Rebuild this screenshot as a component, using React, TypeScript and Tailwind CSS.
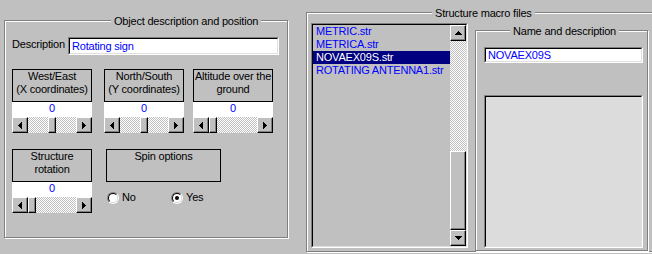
import type { ReactNode } from "react";

const raised =
  "border border-t-white border-l-white border-r-black border-b-black shadow-[inset_-1px_-1px_0_#808080] bg-[#c0c0c0]";
const dither =
  "bg-[image:repeating-conic-gradient(#c0c0c0_0_25%,#ffffff_0_50%)] bg-[length:2px_2px]";
const sunkenOuter = "border border-t-[#808080] border-l-[#808080] border-r-white border-b-white";
const sunkenInner = "border border-t-black border-l-black border-r-[#dfdfdf] border-b-[#dfdfdf]";

function GroupBox({
  title,
  titleClass,
  className,
  children,
}: {
  title: string;
  titleClass: string;
  className: string;
  children: ReactNode;
}) {
  return (
    <div
      className={`relative shrink-0 border border-[#808080] shadow-[inset_1px_1px_0_#fff,1px_1px_0_#fff] ${className}`}
    >
      <span className={`absolute whitespace-nowrap bg-[#c0c0c0] px-[3px] ${titleClass}`}>{title}</span>
      {children}
    </div>
  );
}

function TextBox({ text, className }: { text: string; className: string }) {
  return (
    <div className={`${sunkenOuter} ${className}`}>
      <div className={`${sunkenInner} h-full bg-white pl-[2px] text-[#0000ff]`}>{text}</div>
    </div>
  );
}

function Arrow({ dir }: { dir: "left" | "right" | "up" | "down" }) {
  const horiz = dir === "left" || dir === "right";
  const steps = [0, 1, 2, 3];
  return (
    <svg width={horiz ? 4 : 7} height={horiz ? 7 : 4} shapeRendering="crispEdges">
      {steps.map((i) => {
        const len = 1 + i * 2;
        const pos = dir === "left" || dir === "up" ? i : 3 - i;
        const off = 3 - i;
        return horiz ? (
          <rect key={i} x={pos} y={off} width={1} height={len} fill="#000" />
        ) : (
          <rect key={i} x={off} y={pos} width={len} height={1} fill="#000" />
        );
      })}
    </svg>
  );
}

function HScroll({ before }: { before: string }) {
  return (
    <div className="flex h-[16px] w-[80px]">
      <div className={`${raised} flex w-[16px] items-center justify-center`}>
        <Arrow dir="left" />
      </div>
      <div className={`${dither} flex flex-1`}>
        <div className={before} />
        <div className={`${raised} w-[8px]`} />
      </div>
      <div className={`${raised} flex w-[16px] items-center justify-center`}>
        <Arrow dir="right" />
      </div>
    </div>
  );
}

function CoordBox({ lines, before, className = "" }: { lines: [string, string]; before: string; className?: string }) {
  return (
    <div className={`flex w-[80px] flex-col ${className}`}>
      <div className="h-[33px] overflow-hidden border border-black text-center whitespace-nowrap">
        {lines[0]}
        <br />
        {lines[1]}
      </div>
      <div className="h-[15px] bg-white text-center text-[#0000ff]">0</div>
      <HScroll before={before} />
    </div>
  );
}

function Radio({ checked }: { checked?: boolean }) {
  return (
    <span className="flex h-[12px] w-[12px] rounded-full border border-t-[#808080] border-l-[#808080] border-r-white border-b-white">
      <span className="flex flex-1 items-center justify-center rounded-full border border-t-black border-l-black border-r-[#dfdfdf] border-b-[#dfdfdf] bg-white">
        {checked && <span className="h-[4px] w-[4px] rounded-full bg-black" />}
      </span>
    </span>
  );
}

function ObjectPanel() {
  return (
    <GroupBox
      title="Object description and position"
      titleClass="left-[106px] top-[-6px]"
      className="ml-[4px] mt-[20px] h-[218px] w-[284px]"
    >
      <div className="flex flex-col pl-[7px] pt-[16px]">
        <div className="flex items-start">
          <span className="w-[56px] pt-[1px]">Description</span>
          <TextBox text="Rotating sign" className="h-[18px] w-[211px] leading-[14px]" />
        </div>
        <div className="mt-[14px] flex items-start">
          <CoordBox lines={["West/East", "(X coordinates)"]} before="w-[20px]" />
          <CoordBox lines={["North/South", "(Y coordinates)"]} before="w-[20px]" className="ml-[12px]" />
          <CoordBox lines={["Altitude over the", "ground"]} before="w-0" className="ml-[9px]" />
        </div>
        <div className="mt-[16px] flex items-start">
          <CoordBox lines={["Structure", "rotation"]} before="w-0" />
          <div className="ml-[14px] flex flex-col">
            <div className="h-[33px] w-[115px] border border-black text-center">Spin options</div>
            <div className="mt-[9px] flex items-center pl-[1px]">
              <div className="flex w-[64px] items-center gap-[3px]">
                <Radio />
                <span>No</span>
              </div>
              <div className="flex items-center gap-[3px]">
                <Radio checked />
                <span>Yes</span>
              </div>
            </div>
          </div>
        </div>
      </div>
    </GroupBox>
  );
}

const files = ["METRIC.str", "METRICA.str", "NOVAEX09S.str", "ROTATING ANTENNA1.str"];

function ListBox() {
  return (
    <div className={`${sunkenOuter} h-[225px] w-[157px]`}>
      <div className={`${sunkenInner} flex h-full`}>
        <ul className="flex-1 overflow-hidden">
          {files.map((f) => (
            <li
              key={f}
              className={`h-[13px] whitespace-pre pl-[3px] ${
                f === "NOVAEX09S.str" ? "bg-[#000080] text-white" : "text-[#0000ff]"
              }`}
            >
              {f}
            </li>
          ))}
        </ul>
        <div className="flex w-[16px] flex-col">
          <div className={`${raised} flex h-[16px] items-center justify-center`}>
            <Arrow dir="up" />
          </div>
          <div className={`${dither} flex-1`} />
          <div className={`${raised} h-[79px]`} />
          <div className={`${raised} flex h-[16px] items-center justify-center`}>
            <Arrow dir="down" />
          </div>
        </div>
      </div>
    </div>
  );
}

function MacroPanel() {
  return (
    <GroupBox
      title="Structure macro files"
      titleClass="left-[125px] top-[-6px]"
      className="ml-[18px] mt-[12px] h-[240px] w-[360px]"
    >
      <div className="flex items-start pl-[4px] pt-[10px]">
        <ListBox />
        <GroupBox
          title="Name and description"
          titleClass="left-[34px] top-[-6px]"
          className="ml-[7px] mt-[7px] h-[221px] w-[173px]"
        >
          <div className="flex flex-col pl-[8px] pt-[16px]">
            <TextBox text="NOVAEX09S" className="h-[16px] w-[159px] leading-[12px]" />
            <div className={`${sunkenOuter} mt-[32px] h-[153px] w-[159px]`}>
              <div className={`${sunkenInner} h-full bg-[#dcdcdc]`} />
            </div>
          </div>
        </GroupBox>
      </div>
    </GroupBox>
  );
}

export default function App() {
  return (
    <div className="flex h-[254px] w-[652px] items-start overflow-hidden bg-[#c0c0c0] font-['Liberation_Sans',Arial,sans-serif] text-[11px] leading-[13px] tracking-[-0.2px] text-black">
      <ObjectPanel />
      <MacroPanel />
    </div>
  );
}
